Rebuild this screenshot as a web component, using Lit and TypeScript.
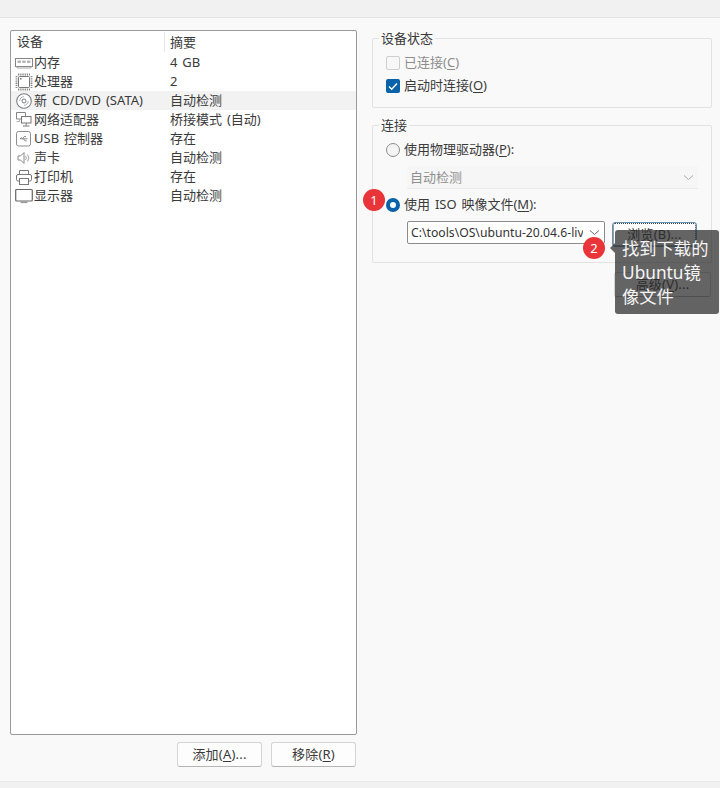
import { LitElement, html, css, svg } from "lit";
import { customElement } from "lit/decorators.js";

const icons: Record<string, unknown> = {
  mem: svg`<rect x="0.5" y="4.500" width="17" height="8" fill="#fff" stroke="#858585"/><path d="M2.500 6.500h3.500v2.500H2.500zM7.200 6.500h3.500v2.500H7.200zM12 6.500h3.500v2.500H12z" fill="#b5b5b5"/><path d="M2 12.500v1.500h14v-1.500" fill="none" stroke="#a5a5a5"/>`,
  cpu: svg`<rect x="3.500" y="3.500" width="11" height="11" rx="1" fill="#fff" stroke="#777"/><path d="M1.500 3v12M16.500 3v12M3 1.500h12M3 16.500h12" fill="none" stroke="#8a8a8a" stroke-width="1.800" stroke-dasharray="1.300 0.900"/><rect x="5" y="5" width="1.500" height="1.500" fill="#777"/>`,
  disc: svg`<circle cx="9" cy="9" r="7.300" fill="#fff" stroke="#7c8085" stroke-width="1.100"/><circle cx="9" cy="9" r="2" fill="none" stroke="#808080"/><path d="M4.700 9A4.300 4.300 0 0 1 9 4.700M13.300 9A4.300 4.300 0 0 1 9 13.300" fill="none" stroke="#b0b0b0"/>`,
  net: svg`<path d="M1.500 1.500h9v6.500h-9z" fill="#fff" stroke="#858585"/><path d="M4.500 8v2.500h-3" fill="none" stroke="#b0b0b0"/><rect x="6.500" y="5.500" width="9.500" height="6.500" fill="#fff" stroke="#777"/><path d="M11.200 12v2.500M8 15h6.500" fill="none" stroke="#777"/>`,
  usb: svg`<rect x="1.500" y="1.500" width="14" height="14.500" rx="2" fill="#fff" stroke="#8d8d8d"/><path d="M5 8.800h7.500M5 8.800l1.800-1.500M7.500 8.800L9.300 6.500h1.700M8.500 8.800l1.500 2h1.500" fill="none" stroke="#808080" stroke-width=".9"/>`,
  sound: svg`<path d="M3 7h2.500l3.500-3.500v11L5.500 11H3z" fill="#fff" stroke="#8a8a8a"/><path d="M10.500 7a3 3 0 0 1 0 4M12.500 5.500a5.500 5.500 0 0 1 0 7" fill="none" stroke="#a0a0a0"/>`,
  print: svg`<path d="M4.500 6.500v-4h9v4" fill="#fff" stroke="#777"/><rect x="1.500" y="6.500" width="15" height="6.500" rx="1.500" fill="#fff" stroke="#777"/><rect x="4.500" y="10.500" width="9" height="6" fill="#fff" stroke="#777"/>`,
  mon: svg`<rect x="0.700" y="2.500" width="16.600" height="11.500" rx="1" fill="#fff" stroke="#666" stroke-width="1.200"/><path d="M5.500 15.300h7" stroke="#999" stroke-width="1.600"/>`,
};

const rows = [
  ["mem", "内存", "4 GB"],
  ["cpu", "处理器", "2"],
  ["disc", "新 CD/DVD (SATA)", "自动检测"],
  ["net", "网络适配器", "桥接模式 (自动)"],
  ["usb", "USB 控制器", "存在"],
  ["sound", "声卡", "自动检测"],
  ["print", "打印机", "存在"],
  ["mon", "显示器", "自动检测"],
];

@customElement("app-root")
export class AppRoot extends LitElement {
  static styles = css`
    :host {
      display: flex; flex-direction: column; position: relative;
      width: 720px; height: 788px; overflow: hidden; background: #f9f9f9;
      font: 13px/19px "Noto Sans", "Noto Sans CJK SC", sans-serif; color: #3a3a3a;
      word-spacing: 1.500px;
    }
    .top { height: 17px; flex: none; background: #f1f1f1; border-bottom: 1px solid #e4e4e4; }
    .bottom { height: 6px; flex: none; background: #f1f1f1; border-top: 1px solid #e8e8e8; }
    .main { flex: 1; display: flex; min-height: 0; padding: 12px 8px 0 10px; gap: 15px; }
    .left { width: 347px; flex: none; display: flex; flex-direction: column; }
    .list { height: 705px; flex: none; box-sizing: border-box; background: #fff; border: 1px solid #9a9a9a; border-radius: 2px; padding-top: 1px; }
    .row { display: grid; grid-template-columns: 154px 1fr; height: 19px; align-items: center; padding-right: 1px; }
    .row.sel { background: #f2f2f2; }
    .head { height: 20px; margin-bottom: 1px; }
    .head .a { padding-left: 6px; height: 20px; border-right: 1px solid #e8e8e8; box-sizing: border-box; width: 154px; }
    .name { display: flex; align-items: center; gap: 1px; padding-left: 4px; white-space: pre; }
    .name svg { width: 18px; height: 18px; flex: none; }
    .val { padding-left: 5px; white-space: pre; }
    .actions { display: flex; justify-content: flex-end; gap: 9px; margin-top: 7px; padding-right: 1px; }
    .btn { box-sizing: border-box; height: 25px; background: #fdfdfd; border: 1px solid #d4d4d4; border-bottom-color: #b5b5b5; border-radius: 3px; display: flex; align-items: center; justify-content: center; white-space: pre; letter-spacing: 0.200px; }
    .actions .btn { width: 85px; }
    .right { flex: 1; display: flex; flex-direction: column; padding-top: 8px; }
    .group { position: relative; box-sizing: border-box; border: 1px solid #e2e2e2; border-radius: 2px; padding: 0 8px 0 13px; }
    .legend { position: absolute; left: 6px; top: -10px; padding: 0 2px; background: #f9f9f9; }
    .g1 { height: 70px; padding-top: 14px; margin-bottom: 17px; }
    .g2 { height: 138px; padding-top: 14px; }
    .opt { display: flex; align-items: center; gap: 4px; height: 19px; white-space: pre; }
    .opt.dis { color: #8c8c8c; }
    .opt + .opt { margin-top: 4px; }
    .box { width: 12px; height: 12px; border: 1px solid #cfcfcf; border-radius: 2px; background: #f7f7f7; }
    .box.on { width: 14px; height: 14px; border: 0; background: #0a62a8; display: flex; }
    .box svg { width: 14px; height: 14px; }
    .radio { box-sizing: border-box; width: 14px; height: 14px; border-radius: 50%; border: 1px solid #8d8d8d; background: #f4f4f4; }
    .radio.on { border: 4px solid #0a62a8; background: #fff; }
    u { text-underline-offset: 2px; }
    .drop { box-sizing: border-box; height: 23px; margin: 7px 0 6px 21px; width: 291px; background: #f6f6f6; border-bottom: 1px solid #eaeaea; color: #8f8f8f; display: flex; align-items: center; justify-content: space-between; padding: 0 4px 0 3px; }
    .isoRow { display: flex; margin: 7px 0 0 21px; gap: 7px; align-items: flex-start; }
    .combo { box-sizing: border-box; width: 198px; height: 23px; background: #fff; border: 1px solid #8c8c8c; border-radius: 2px; display: flex; align-items: center; padding: 0 4px 0 3px; gap: 6px; }
    .combo span { flex: 1; overflow: hidden; white-space: pre; color: #333; font-size: 12.200px; }
    .chev { width: 11px; height: 7px; flex: none; }
    .browse { width: 85px; height: 25px; margin-top: 1px; border: 1px solid #5f93b5; outline: 1px dotted #3d3d3d; outline-offset: -2px; }
    .adv { width: 97px; align-self: flex-end; margin: 9px 1px 0 0; }
    .badge { position: absolute; width: 22px; height: 22px; border-radius: 50%; background: #e9343a; color: #fff; font-size: 13px; line-height: 22px; text-align: center; z-index: 3; }
    .b1 { left: 363px; top: 189px; }
    .b2 { left: 583px; top: 237px; }
    .tip { position: absolute; left: 615px; top: 230px; width: 104px; height: 84px; box-sizing: border-box; padding: 7px 5px 0 7px; background: rgba(40, 40, 40, 0.72); border-radius: 3px; color: #f4f4f4; font-size: 17.300px; line-height: 24px; z-index: 2; }
    .tip::before { content: ""; position: absolute; left: -5px; top: 13px; border: 5px solid transparent; border-left: 0; border-right-color: rgba(40, 40, 40, 0.72); }
  `;

  render() {
    const chev = (c: string) => html`<svg class="chev" viewBox="0 0 11 7"><path d="M1 1.500l4.500 4 4.500-4" fill="none" stroke=${c}/></svg>`;
    return html`
      <div class="top"></div>
      <div class="main">
        <div class="left">
          <div class="list">
            <div class="row head"><div class="a">设备</div><div class="val">摘要</div></div>
            ${rows.map(([ic, n, v]) => html`
              <div class="row ${ic === "disc" ? "sel" : ""}">
                <div class="name"><svg viewBox="0 0 18 18">${icons[ic]}</svg><span>${n}</span></div>
                <div class="val">${v}</div>
              </div>`)}
          </div>
          <div class="actions">
            <div class="btn"><span>添加(<u>A</u>)...</span></div>
            <div class="btn"><span>移除(<u>R</u>)</span></div>
          </div>
        </div>
        <div class="right">
          <div class="group g1">
            <div class="legend">设备状态</div>
            <div class="opt dis"><div class="box"></div><span>已连接(<u>C</u>)</span></div>
            <div class="opt"><div class="box on"><svg viewBox="0 0 14 14"><path d="M3 7.500l2.700 2.700L11 4.500" fill="none" stroke="#fff" stroke-width="1.400"/></svg></div><span>启动时连接(<u>O</u>)</span></div>
          </div>
          <div class="group g2">
            <div class="legend">连接</div>
            <div class="opt"><div class="radio"></div><span>使用物理驱动器(<u>P</u>):</span></div>
            <div class="drop"><span>自动检测</span>${chev("#aaa")}</div>
            <div class="opt"><div class="radio on"></div><span>使用 ISO 映像文件(<u>M</u>):</span></div>
            <div class="isoRow">
              <div class="combo"><span>C:\\tools\\OS\\ubuntu-20.04.6-liv</span>${chev("#666")}</div>
              <div class="btn browse"><span>浏览(<u>B</u>)...</span></div>
            </div>
          </div>
          <div class="btn adv"><span>高级(<u>V</u>)...</span></div>
        </div>
      </div>
      <div class="bottom"></div>
      <div class="badge b1">1</div>
      <div class="badge b2">2</div>
      <div class="tip">找到下载的Ubuntu镜像文件</div>
    `;
  }
}
